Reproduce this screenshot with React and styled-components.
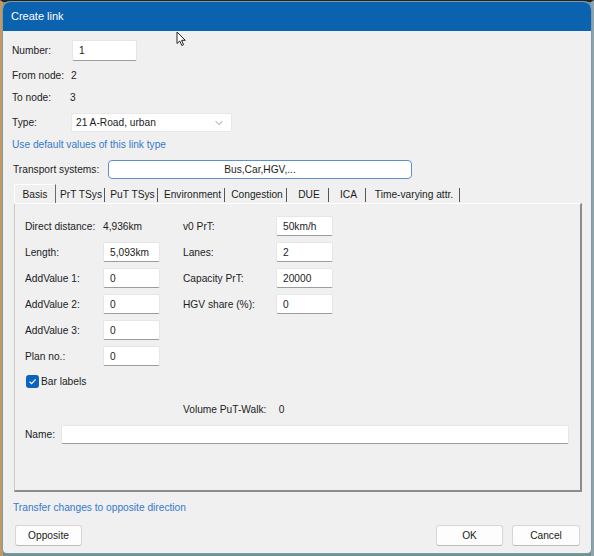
import React from "react";
import styled, { createGlobalStyle } from "styled-components";
import { ChevronDown } from "lucide-react";

const Global = createGlobalStyle`
  html, body { margin: 0; padding: 0; }
  body { font-family: "Liberation Sans", Arial, sans-serif; font-size: 10.2px; color: #1c1c1c; }
  * { box-sizing: border-box; }
`;

const Page = styled.div`
  position: relative;
  width: 594px;
  height: 556px;
  background: #6e9291;
  border-top: 2px solid #1f2326;
  border-left: 3px solid #c59a62;
  border-right: 3px solid #8fa3ad;
  display: flex;
  flex-direction: column;
  align-items: flex-start;
`;

const Window = styled.div`
  width: 588px;
  height: 551px;
  background: #f0f0f0;
  border-radius: 7px 7px 4px 4px;
  overflow: hidden;
  display: flex;
  flex-direction: column;
  box-shadow: 0 0 0 1px #7d9aa6;
`;

const TitleBar = styled.div`
  height: 29px;
  flex: none;
  background: #0b63b0;
  color: #fff;
  font-size: 11px;
  display: flex;
  align-items: center;
  padding-left: 8px;
  padding-bottom: 1px;
`;

const Body = styled.div`
  flex: 1;
  padding: 0 9px 0 9px;
  display: flex;
  flex-direction: column;
`;

const Row = styled.div`
  display: flex;
  align-items: center;
  height: ${(p) => p.$h}px;
  margin-top: ${(p) => p.$mt}px;
  padding-left: ${(p) => p.$pl || 0}px;
`;

const Label = styled.span`
  flex: none;
  width: ${(p) => p.$w}px;
  white-space: nowrap;
`;

const Value = styled.span`
  white-space: nowrap;
`;

const TextBox = styled.div`
  width: ${(p) => (p.$w ? `${p.$w}px` : "auto")};
  flex: ${(p) => (p.$w ? "none" : "1")};
  height: ${(p) => p.$h || 20}px;
  background: #fff;
  border: 1px solid #e6e6e6;
  border-bottom: 1px solid #9c9c9c;
  border-radius: 2px;
  display: flex;
  align-items: center;
  padding-left: 6px;
  white-space: nowrap;
`;

const Select = styled.div`
  width: 161px;
  height: 19px;
  background: #fff;
  border: 1px solid #e8e8e8;
  border-radius: 2px;
  display: flex;
  align-items: center;
  justify-content: space-between;
  padding: 0 6px 0 4px;
  color: #1c1c1c;
  svg { color: #707070; }
`;

const Link = styled.span`
  color: #3579cc;
  white-space: nowrap;
`;

const SysBox = styled.div`
  width: 304px;
  height: 19px;
  background: #fff;
  border: 1.5px solid #5b8fd0;
  border-radius: 4px;
  display: flex;
  align-items: center;
  justify-content: center;
  margin-left: 8px;
`;

const Tabs = styled.div`
  display: flex;
  height: 19px;
  margin-top: 5px;
  margin-left: 2px;
  align-items: stretch;
`;

const Tab = styled.div`
  width: ${(p) => p.$w}px;
  display: flex;
  align-items: center;
  justify-content: center;
  position: relative;
  white-space: nowrap;
  background: ${(p) => (p.$active ? "#f0f0f0" : "transparent")};
  border-top: 1px solid ${(p) => (p.$active ? "#ffffff" : "transparent")};
  border-left: 1px solid ${(p) => (p.$active ? "#ffffff" : "transparent")};
  border-right: 1px solid ${(p) => (p.$active ? "#6a6a6a" : "transparent")};
  padding-top: 1px;
  &::after {
    content: "";
    display: ${(p) => (p.$active ? "none" : "block")};
    position: absolute;
    right: 0;
    top: 3px;
    bottom: 1px;
    width: 1px;
    background: #555;
  }
`;

const Panel = styled.div`
  height: 289px;
  margin-left: 2px;
  border-top: 1px solid #ffffff;
  border-left: 1px solid #c9c9c9;
  border-right: 2px solid #8c8c8c;
  border-bottom: 2px solid #8c8c8c;
  padding: 12px 11px 0 10px;
  display: flex;
  flex-direction: column;
`;

const FieldGrid = styled.div`
  display: grid;
  grid-template-columns: 78px 57px 23px 93px 57px;
  grid-template-rows: repeat(6, 20px) 18px 26px;
  row-gap: 6px;
  align-items: center;
`;

const Cell = styled.div`
  grid-column: ${(p) => p.$col};
  grid-row: ${(p) => p.$row};
  white-space: nowrap;
  display: flex;
  align-items: center;
  height: 100%;
`;

const CheckRow = styled.label`
  display: flex;
  align-items: center;
  gap: 2px;
  padding-left: 1px;
`;

const CheckBox = styled.span`
  width: 13px;
  height: 13px;
  border-radius: 3px;
  background: #0a63bd;
  display: flex;
  align-items: center;
  justify-content: center;
`;

const NameRow = styled.div`
  display: flex;
  align-items: center;
  margin-top: 3px;
  height: 19px;
`;

const ButtonRow = styled.div`
  display: flex;
  align-items: center;
  height: 21px;
  margin-top: 10px;
  padding: 0 2px 0 3px;
  gap: 9px;
`;

const Button = styled.div`
  width: ${(p) => p.$w || 67}px;
  height: 21px;
  background: #fdfdfd;
  border: 1px solid #d6d6d6;
  border-bottom-color: #bcbcbc;
  border-radius: 3px;
  display: flex;
  align-items: center;
  justify-content: center;
  margin-left: ${(p) => (p.$push ? "auto" : "0")};
`;

const Cursor = styled.svg`
  position: absolute;
  left: 173px;
  top: 29px;
`;

export default function App() {
  const tabs = [
    ["Basis", 42, true],
    ["PrT TSys", 50],
    ["PuT TSys", 53],
    ["Environment", 67],
    ["Congestion", 62],
    ["DUE", 42],
    ["ICA", 37],
    ["Time-varying attr.", 94],
  ];
  const left = [
    ["Direct distance:", null, "4,936km"],
    ["Length:", "5,093km"],
    ["AddValue 1:", "0"],
    ["AddValue 2:", "0"],
    ["AddValue 3:", "0"],
    ["Plan no.:", "0"],
  ];
  const right = [
    ["v0 PrT:", "50km/h"],
    ["Lanes:", "2"],
    ["Capacity PrT:", "20000"],
    ["HGV share (%):", "0"],
  ];
  return (
    <>
      <Global />
      <Page>
        <Window>
          <TitleBar>Create link</TitleBar>
          <Body>
            <Row $h={21} $mt={9}>
              <Label $w={60}>Number:</Label>
              <TextBox $w={65} $h={21}>1</TextBox>
            </Row>
            <Row $h={20} $mt={4}>
              <Label $w={59}>From node:</Label>
              <Value>2</Value>
            </Row>
            <Row $h={20} $mt={2}>
              <Label $w={58}>To node:</Label>
              <Value>3</Value>
            </Row>
            <Row $h={19} $mt={6}>
              <Label $w={59}>Type:</Label>
              <Select>
                <span>21 A-Road, urban</span>
                <ChevronDown size={12} strokeWidth={1.5} />
              </Select>
            </Row>
            <Row $h={16} $mt={4}>
              <Link>Use default values of this link type</Link>
            </Row>
            <Row $h={19} $mt={8} $pl={1}>
              <Label $w={87}>Transport systems:</Label>
              <SysBox>Bus,Car,HGV,...</SysBox>
            </Row>
            <Tabs>
              {tabs.map(([t, w, a]) => (
                <Tab key={t} $w={w} $active={a}>
                  {t}
                </Tab>
              ))}
            </Tabs>
            <Panel>
              <FieldGrid>
                {left.map(([l, v, plain], i) => (
                  <React.Fragment key={l}>
                    <Cell $col={1} $row={i + 1}>{l}</Cell>
                    <Cell $col={2} $row={i + 1}>
                      {plain ? plain : <TextBox $w={57}>{v}</TextBox>}
                    </Cell>
                  </React.Fragment>
                ))}
                {right.map(([l, v], i) => (
                  <React.Fragment key={l}>
                    <Cell $col={4} $row={i + 1}>{l}</Cell>
                    <Cell $col={5} $row={i + 1}>
                      <TextBox $w={57}>{v}</TextBox>
                    </Cell>
                  </React.Fragment>
                ))}
                <Cell $col="1 / 4" $row={7}>
                  <CheckRow>
                    <CheckBox>
                      <svg width="9" height="9" viewBox="0 0 9 9">
                        <path d="M1.5 4.6 L3.6 6.7 L7.6 2.3" fill="none" stroke="#fff" strokeWidth="1.2" />
                      </svg>
                    </CheckBox>
                    Bar labels
                  </CheckRow>
                </Cell>
                <Cell $col={4} $row={8}>Volume PuT-Walk:</Cell>
                <Cell $col={5} $row={8}>&nbsp;0</Cell>
              </FieldGrid>
              <NameRow>
                <Label $w={36}>Name:</Label>
                <TextBox $h={19} />
              </NameRow>
            </Panel>
            <Row $h={16} $mt={7} $pl={1}>
              <Link>Transfer changes to opposite direction</Link>
            </Row>
            <ButtonRow>
              <Button>Opposite</Button>
              <Button $push>OK</Button>
              <Button $w={68}>Cancel</Button>
            </ButtonRow>
          </Body>
        </Window>
        <Cursor width="12" height="16" viewBox="0 0 12 16">
          <path d="M1 1 L1 12.5 L3.8 10 L5.8 14.5 L7.6 13.7 L5.6 9.3 L9.3 9.3 Z" fill="#fff" stroke="#222" strokeWidth="1" />
        </Cursor>
      </Page>
    </>
  );
}
